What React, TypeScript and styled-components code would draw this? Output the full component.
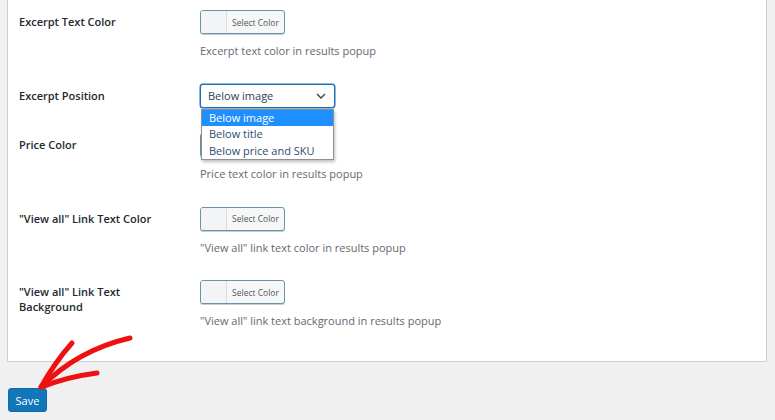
import styled, { createGlobalStyle } from 'styled-components';

const GlobalStyle = createGlobalStyle`
  html, body {
    margin: 0;
    padding: 0;
    background: #f0f0f1;
  }
  body {
    font-family: 'Open Sans', 'Noto Sans', sans-serif;
    color: #23282d;
  }
`;

interface ColorRow {
  kind: 'color';
  label: string[];
  description: string;
}

interface SelectRow {
  kind: 'select';
  label: string[];
  value: string;
  options: string[];
}

type Row = ColorRow | SelectRow;

const rows: Row[] = [
  {
    kind: 'color',
    label: ['Excerpt Text Color'],
    description: 'Excerpt text color in results popup',
  },
  {
    kind: 'select',
    label: ['Excerpt Position'],
    value: 'Below image',
    options: ['Below image', 'Below title', 'Below price and SKU'],
  },
  {
    kind: 'color',
    label: ['Price Color'],
    description: 'Price text color in results popup',
  },
  {
    kind: 'color',
    label: ['"View all" Link Text Color'],
    description: '"View all" link text color in results popup',
  },
  {
    kind: 'color',
    label: ['"View all" Link Text', 'Background'],
    description: '"View all" link text background in results popup',
  },
];

const App = () => {
  return (
    <Page>
      <GlobalStyle />
      <Panel>
        {rows.map((row, index) => (
          <SettingRow key={index}>
            <Label>
              {row.label.map((line, i) => (
                <span key={i}>{line}</span>
              ))}
            </Label>
            <Field>
              {row.kind === 'color' ? (
                <>
                  <ColorButton type="button">
                    <Swatch />
                    <ColorText>Select Color</ColorText>
                  </ColorButton>
                  <Description>{row.description}</Description>
                </>
              ) : (
                <SelectWrap>
                  <SelectBox>
                    <span>{row.value}</span>
                    <svg width="10" height="6" viewBox="0 0 10 6">
                      <path
                        d="M1 1 L5 5 L9 1"
                        fill="none"
                        stroke="#3c434a"
                        strokeWidth="1.4"
                      />
                    </svg>
                  </SelectBox>
                  <OptionList>
                    {row.options.map((option, i) => (
                      <Option key={option} active={i === 0}>
                        {option}
                      </Option>
                    ))}
                  </OptionList>
                </SelectWrap>
              )}
            </Field>
          </SettingRow>
        ))}
      </Panel>
      <Footer>
        <SaveButton type="button">Save</SaveButton>
      </Footer>
      <Arrow width="140" height="70" viewBox="0 0 140 70">
        <g
          fill="none"
          stroke="#ee1111"
          strokeWidth="5"
          strokeLinecap="round"
          strokeLinejoin="round"
        >
          <path d="M130 8 Q 78 20 41 57" />
          <path d="M72 13 Q 55 32 41 57" />
          <path d="M97 43 Q 66 47 42 57" />
        </g>
      </Arrow>
    </Page>
  );
};

export default App;

const Page = styled.div`
  position: relative;
  width: 775px;
  height: 420px;
  padding: 0 8px 0 7px;
  box-sizing: border-box;
  overflow: hidden;
`;

const Panel = styled.div`
  background: #fff;
  border: 1px solid #ccd0d4;
  border-top: none;
  padding: 10px 11px 7px;
  display: flex;
  flex-direction: column;
`;

const SettingRow = styled.div`
  display: grid;
  grid-template-columns: 181px 1fr;
  padding-bottom: 25.5px;
`;

const Label = styled.div`
  padding-top: 4px;
  display: flex;
  flex-direction: column;
  font-size: 11px;
  line-height: 15px;
  font-weight: 600;
  color: #23282d;
`;

const Field = styled.div`
  display: flex;
  flex-direction: column;
  align-items: flex-start;
`;

const ColorButton = styled.button`
  display: flex;
  align-items: stretch;
  width: 85px;
  height: 24px;
  padding: 0;
  border: 1px solid #6b93a6;
  border-radius: 3px;
  background: #f6f7f7;
  box-shadow: 0 1px 0 #c3cfd6;
  cursor: pointer;
  overflow: hidden;
`;

const Swatch = styled.span`
  width: 25px;
  border-right: 1px solid #dcdcde;
  background: #f3f4f5;
`;

const ColorText = styled.span`
  flex: 1;
  display: flex;
  align-items: center;
  justify-content: center;
  font-family: 'Open Sans', 'Noto Sans', sans-serif;
  font-size: 8.5px;
  color: #50575e;
`;

const Description = styled.p`
  margin: 10px 0 0;
  font-size: 11px;
  line-height: 14px;
  color: #646970;
`;

const SelectWrap = styled.div`
  position: relative;
`;

const SelectBox = styled.div`
  display: flex;
  align-items: center;
  justify-content: space-between;
  box-sizing: border-box;
  width: 135px;
  height: 24px;
  padding: 0 8px 0 7px;
  border: 1px solid #2271b1;
  border-radius: 3px;
  box-shadow: 0 0 0 0.5px #2271b1;
  font-size: 11px;
  color: #2c3e55;
  background: #fff;
`;

const OptionList = styled.ul`
  position: absolute;
  top: 25px;
  left: 1px;
  width: 133px;
  box-sizing: border-box;
  margin: 0;
  padding: 0;
  list-style: none;
  background: #fff;
  border: 1px solid #8c8f94;
  box-shadow: 1px 2px 3px rgba(0, 0, 0, 0.25);
  z-index: 2;
`;

const Option = styled.li<{ active?: boolean }>`
  height: 16.5px;
  line-height: 16.5px;
  padding-left: 7px;
  font-size: 11px;
  color: ${({ active }) => (active ? '#fff' : '#2c4e6e')};
  background: ${({ active }) => (active ? '#1e8fff' : '#fff')};
`;

const Footer = styled.div`
  padding-top: 26px;
  padding-left: 1px;
`;

const SaveButton = styled.button`
  width: 39px;
  height: 24px;
  padding: 0;
  border: 1px solid #0a6ba8;
  border-radius: 3px;
  background: #1276b8;
  color: #fff;
  font-family: 'Open Sans', 'Noto Sans', sans-serif;
  font-size: 11px;
  cursor: pointer;
`;

const Arrow = styled.svg`
  position: absolute;
  left: 0;
  top: 330px;
  pointer-events: none;
`;
